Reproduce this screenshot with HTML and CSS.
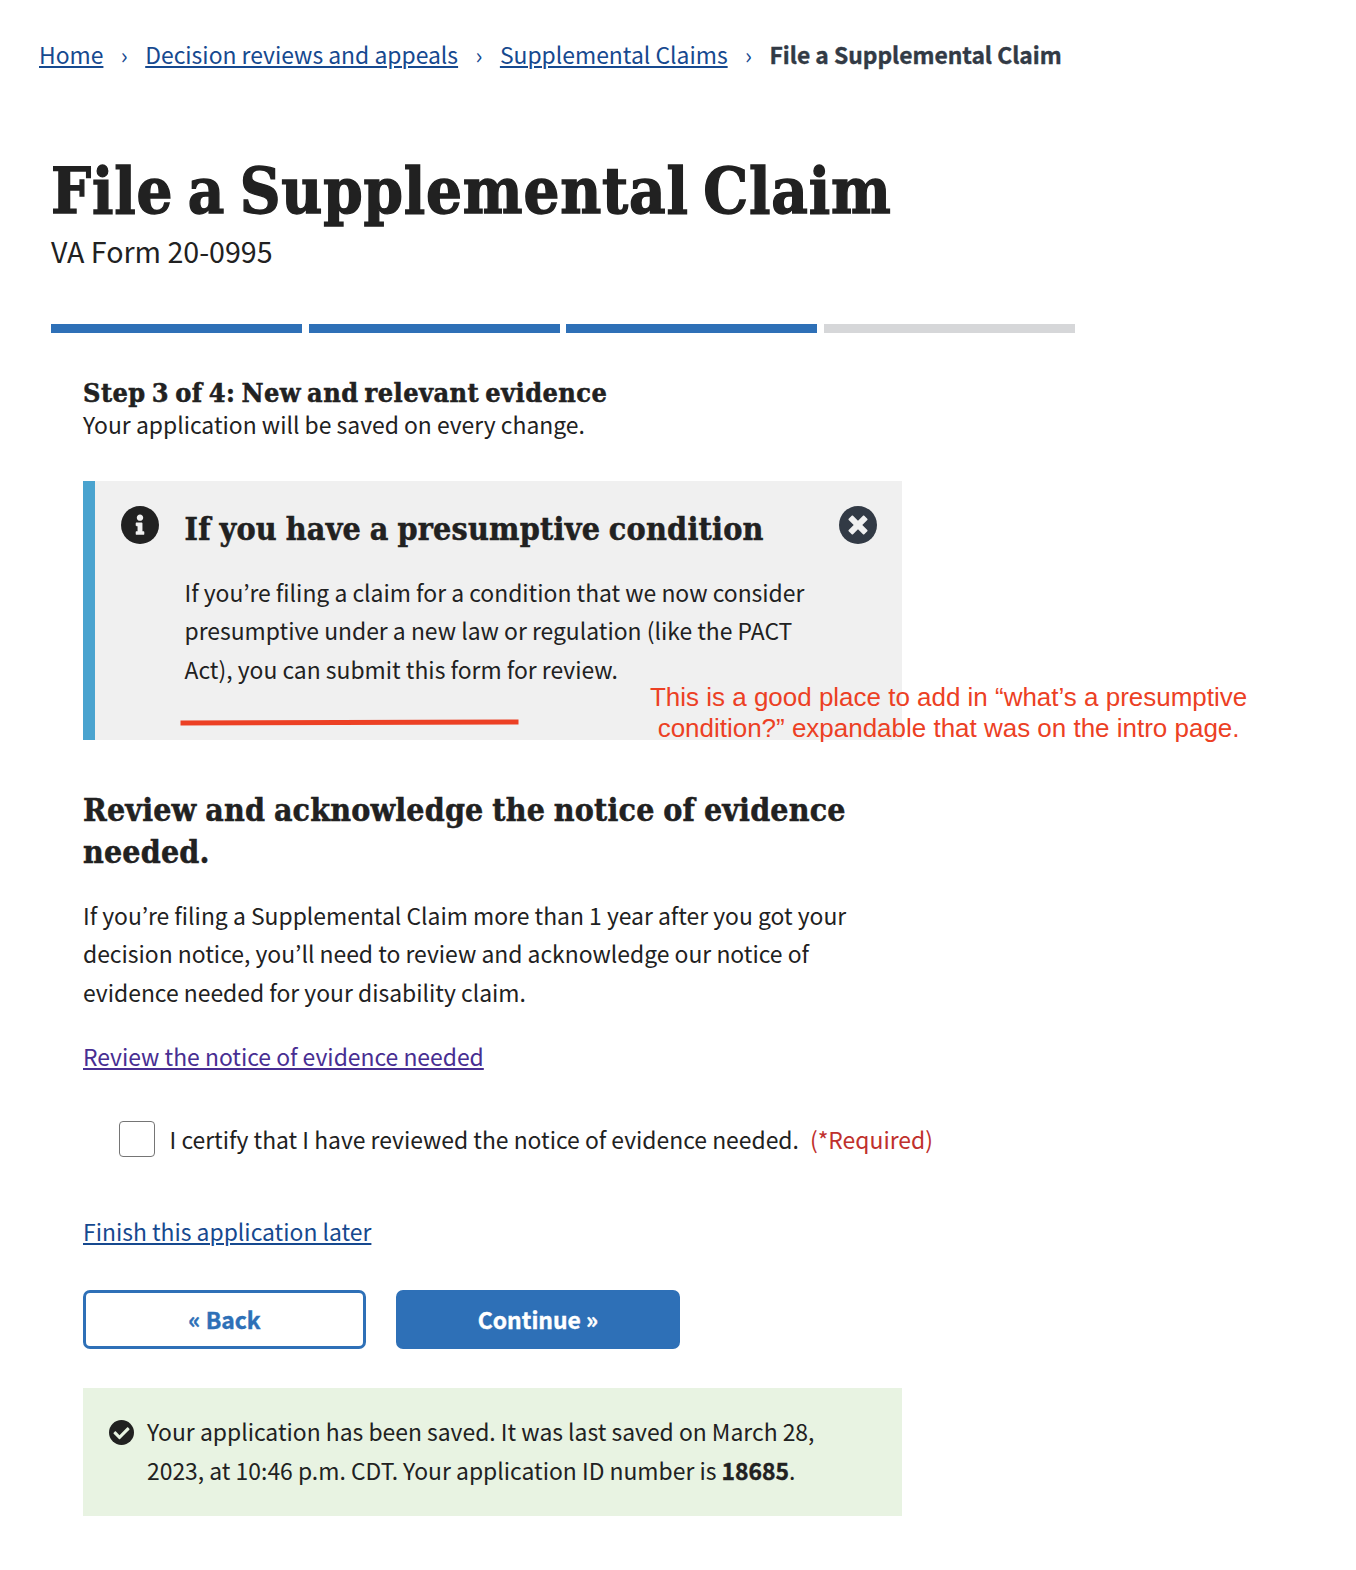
FILE: index.html
```
<!DOCTYPE html>
<html lang="en">
<head>
<meta charset="utf-8">
<title>File a Supplemental Claim</title>
<link rel="stylesheet" href="styles.css">
</head>
<body>
<nav class="breadcrumb" aria-label="Breadcrumb">
  <a href="#">Home</a><span class="sep">›</span>
  <a href="#">Decision reviews and appeals</a><span class="sep">›</span>
  <a href="#">Supplemental Claims</a><span class="sep">›</span>
  <strong>File a Supplemental Claim</strong>
</nav>
<main class="page">
  <h1>File a Supplemental Claim</h1>
  <p class="form-number">VA Form 20-0995</p>
  <div class="progress">
    <span class="segment done"></span><span class="segment done"></span><span class="segment done"></span><span class="segment"></span>
  </div>
  <div class="content">
    <h2 class="step">Step 3 of 4: New and relevant evidence</h2>
    <p class="autosave">Your application will be saved on every change.</p>

    <section class="alert">
      <svg class="alert-icon" viewBox="8 8 496 496"><circle cx="256" cy="256" r="248" fill="#212121"/><path fill="#f0f0f0" d="M256 118c23.200 0 42 18.800 42 42s-18.800 42-42 42-42-18.800-42-42 18.800-42 42-42zM312 372c0 6.600-5.400 12-12 12h-88c-6.600 0-12-5.400-12-12v-24c0-6.600 5.400-12 12-12h12v-64h-12c-6.600 0-12-5.400-12-12v-24c0-6.600 5.400-12 12-12h64c6.600 0 12 5.400 12 12v100h12c6.600 0 12 5.400 12 12z"/></svg>
      <div class="alert-body">
        <h3>If you have a presumptive condition</h3>
        <p>If you’re filing a claim for a condition that we now consider<br>presumptive under a new law or regulation (like the PACT<br>Act), you can submit this form for review.</p>
      </div>
      <button class="close" aria-label="Close">
        <svg viewBox="8 8 496 496"><circle cx="256" cy="256" r="248" fill="#323a45"/><path fill="#f0f0f0" d="M377.600 321.100L312 256l65.600-65.100c4.700-4.700 4.700-12.300 0-17l-39.500-39.500c-4.700-4.700-12.300-4.700-17 0L256 200l-65.100-65.600c-4.700-4.700-12.300-4.700-17 0l-39.500 39.500c-4.700 4.700-4.700 12.300 0 17L200 256l-65.600 65.100c-4.700 4.700-4.700 12.300 0 17l39.500 39.500c4.700 4.700 12.300 4.700 17 0L256 312l65.100 65.600c4.700 4.700 12.300 4.700 17 0l39.500-39.500c4.700-4.700 4.700-12.300 0-17z"/></svg>
      </button>
      <svg class="markup-line" viewBox="0 0 340 8"><path d="M0.500 5.100L338.500 3.900" stroke="#ec4024" stroke-width="5"/></svg>
      <p class="markup-note">This is a good place to add in “what’s a presumptive<br>condition?” expandable that was on the intro page.</p>
    </section>

    <h3 class="review-title">Review and acknowledge the notice of evidence<br>needed.</h3>
    <p class="review-text">If you’re filing a Supplemental Claim more than 1 year after you got your<br>decision notice, you’ll need to review and acknowledge our notice of<br>evidence needed for your disability claim.</p>
    <p class="notice-link"><a class="visited" href="#">Review the notice of evidence needed</a></p>

    <label class="certify">
      <input type="checkbox">
      <span>I certify that I have reviewed the notice of evidence needed.</span>
      <span class="required">(*Required)</span>
    </label>

    <p class="finish"><a href="#">Finish this application later</a></p>
    <div class="buttons">
      <button class="btn back">« Back</button>
      <button class="btn next">Continue »</button>
    </div>

    <div class="saved">
      <svg class="saved-icon" viewBox="8 8 496 496"><circle cx="256" cy="256" r="248" fill="#212121"/><path fill="#e8f3e2" d="M227.300 387.300l184-184c6.200-6.200 6.200-16.400 0-22.600l-22.600-22.600c-6.200-6.200-16.400-6.200-22.600 0L216 308.100l-70.100-70.100c-6.200-6.200-16.400-6.200-22.600 0l-22.600 22.600c-6.200 6.200-6.200 16.400 0 22.600l104 104c6.200 6.300 16.400 6.300 22.600.1z"/></svg>
      <p>Your application has been saved. It was last saved on March 28,<br>2023, at 10:46 p.m. CDT. Your application ID number is <strong>18685</strong>.</p>
    </div>
  </div>
</main>
</body>
</html>
```
FILE: styles.css
```
* { box-sizing: border-box; }
body {
  margin: 0;
  background: #fff;
  color: #212121;
  font: 400 22.9px/38.4px "Noto Sans CJK KR", "Noto Sans CJK SC", sans-serif;
  white-space: nowrap;
}
h1, h2, h3, p { margin: 0; }
h1, h2, h3 {
  font-family: "DejaVu Serif Condensed", "DejaVu Serif", serif;
  font-weight: 700;
  -webkit-text-stroke: 0.5px currentColor;
}
strong, .btn { -webkit-text-stroke: 0.4px currentColor; }
a {
  color: #16498f;
  text-decoration: underline;
  text-decoration-thickness: 2px;
  text-underline-offset: 2px;
}
a.visited { color: #482e92; }

.breadcrumb { display: flex; padding: 35px 0 0 39px; line-height: 38px; }
.breadcrumb .sep { width: 41.800px; text-align: center; color: #16498f; }
.breadcrumb strong { padding-top: 1px; color: #323a45; font-size: 22.8px; line-height: 37px; }

.page { width: 1024px; margin-left: 51px; }
h1 {
  margin-top: 80px;
  font-size: 62.8px;
  line-height: 76px;
  letter-spacing: 0.82px;
  word-spacing: -6px;
  -webkit-text-stroke-width: 1.3px;
}
.form-number { margin-top: 2px; font-size: 28.6px; line-height: 40px; }
.progress { display: grid; grid-template-columns: repeat(4, 1fr); gap: 6.700px; margin-top: 53px; }
.segment { height: 9px; background: #d6d7d9; }
.segment.done { background: #2e70b7; }

.content { width: 819px; margin-left: 32px; }
.step { margin-top: 44px; font-size: 26.850px; line-height: 32px; letter-spacing: 0.44px; word-spacing: -2.700px; }
.autosave { margin-top: -1px; line-height: 32px; }

.alert {
  position: relative;
  display: flex;
  height: 259px;
  margin-top: 41px;
  padding: 25px 25.500px 0 26px;
  border-left: 12px solid #4aa3cf;
  background: #f0f0f0;
}
.alert-icon { width: 38px; height: 38px; margin-right: 25.500px; }
.alert-body { flex: 1; padding-top: 2px; }
.alert h3 { margin-bottom: 23px; font-size: 31.950px; line-height: 42px; letter-spacing: 0.23px; word-spacing: -1.500px; }
.close { width: 38px; height: 38px; padding: 0; border: 0; background: none; }
.close svg { display: block; width: 38px; height: 38px; }
.markup-line { position: absolute; left: 85px; top: 237px; width: 340px; height: 8px; }
.markup-note {
  position: absolute;
  left: 555px;
  top: 201px;
  color: #ec4024;
  font: 25.970px/31px "Liberation Sans", Arial, sans-serif;
  text-align: center;
}

.review-title { margin-top: 49px; font-size: 31.800px; line-height: 42px; letter-spacing: 0.18px; word-spacing: -1.300px; }
.review-text { margin-top: 23px; }
.notice-link { margin-top: 26px; }
.certify { display: flex; margin: 44px 0 0 36px; }
.certify input {
  appearance: none;
  flex: none;
  width: 36px;
  height: 36px;
  margin: 1px 14.600px 0 0;
  border: 1.5px solid #757575;
  border-radius: 4px;
  background: #fff;
}
.required { margin-left: 11px; color: #c0302c; }
.finish { margin-top: 54px; }
.buttons { display: flex; gap: 30px; margin-top: 40px; }
.btn {
  width: 283px;
  height: 59px;
  padding: 0 0 2px;
  border: 3px solid #2e70b7;
  border-radius: 7px;
  font: inherit;
  font-weight: 700;
  line-height: 36px;
}
.back { background: #fff; color: #2e70b7; }
.next { width: 284px; background: #2e70b7; color: #fff; }
.saved { display: flex; height: 128px; margin-top: 39px; padding: 24px 26px; background: #e8f3e2; }
.saved-icon { width: 25px; height: 25px; margin: 8px 13px 0 0; }
```
